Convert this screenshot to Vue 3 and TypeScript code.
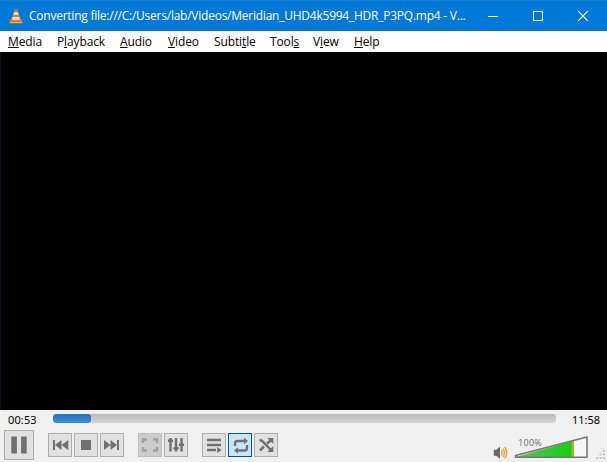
<script setup lang="ts">
interface MenuEntry { before: string; key: string; after: string; width: number }

const menus: MenuEntry[] = [
  { before: '', key: 'M', after: 'edia', width: 49 },
  { before: 'P', key: 'l', after: 'ayback', width: 63 },
  { before: '', key: 'A', after: 'udio', width: 48 },
  { before: '', key: 'V', after: 'ideo', width: 46 },
  { before: 'Subti', key: 't', after: 'le', width: 56 },
  { before: 'Tool', key: 's', after: '', width: 43 },
  { before: 'V', key: 'i', after: 'ew', width: 41 },
  { before: '', key: 'H', after: 'elp', width: 41 },
]
const progress = 7.5
</script>

<template>
  <div class="window">
    <header class="titlebar">
      <svg class="cone" width="14" height="16" viewBox="0 0 14 16">
        <path d="M2 11h10l2 3.2-.8 1.3H.8L0 14.2z" fill="#e57b13" />
        <path d="M6 1h2l3.6 11Q7 14.5 2.4 12z" fill="#e07a24" />
        <path d="M5.1 4h3.8l.9 2.6Q7 7.6 4.2 6.6zM3.4 9h7.2l.9 2.3Q7 13 2.5 11.3z" fill="#dcd6d0" />
        <path d="M1 14.4h12" stroke="#ffad4b" />
      </svg>
      <span class="title">Converting file:///C:/Users/lab/Videos/Meridian_UHD4k5994_HDR_P3PQ.mp4 - V...</span>
      <div class="caption">
        <svg viewBox="0 0 10 10"><path d="M0 5.5h10" /></svg>
        <svg viewBox="0 0 10 10"><path d="M.5.5h9v9h-9z" /></svg>
        <svg viewBox="0 0 10 10"><path class="smooth" d="M.3.3l9.4 9.4M9.7.3L.3 9.7" /></svg>
      </div>
    </header>

    <nav class="menubar">
      <span v-for="m in menus" :key="m.width + m.key" class="menu" :style="{ width: m.width + 'px' }">{{ m.before }}<u>{{ m.key }}</u>{{ m.after }}</span>
    </nav>

    <main class="video"></main>

    <footer class="controls">
      <div class="seek">
        <span class="time">00:53</span>
        <div class="track"><div class="fill" :style="{ width: progress + '%' }"></div></div>
        <span class="time end">11:58</span>
      </div>
      <div class="toolbar">
        <button class="btn play"><svg width="28" height="28" viewBox="0 0 28 28"><path d="M6.3 5.5h5.6v17H6.3zM16.1 5.5h5.6v17h-5.6z" /></svg></button>
        <div class="group">
          <button class="btn"><svg viewBox="0 0 22 22"><path d="M4 6h2v10H4zM12.5 6v10L6 11zM19.3 6v10L12.5 11z" /></svg></button>
          <button class="btn"><svg viewBox="0 0 22 22"><path d="M6 6h10v10H6z" /></svg></button>
          <button class="btn"><svg viewBox="0 0 22 22"><path d="M18 6h-2v10h2zM9.5 6v10l6.5-5zM3 6v10l6.5-5z" /></svg></button>
        </div>
        <div class="group">
          <button class="btn disabled"><svg viewBox="0 0 22 22"><path class="line" d="M8 5.5H4V9M14 5.5h4V9M8 16.5H4V13M14 16.5h4V13" /></svg></button>
          <button class="btn"><svg viewBox="0 0 22 22"><path class="line" d="M5.5 4v13.5M11 4v13.5M16.5 4v13.5" /><path d="M3 5.5h5v2.6H3zM8.5 13h5v2.6h-5zM14 9.5h5v2.6h-5z" /></svg></button>
        </div>
        <div class="group">
          <button class="btn"><svg viewBox="0 0 22 22"><path class="line" d="M4 6h14M4 11h14M4 16h9" /><path d="M14.2 13v6l4.5-3z" /></svg></button>
          <button class="btn active"><svg viewBox="0 0 22 22"><path class="line" d="M6 12V9.5Q6 7 8.5 7H16M18 11v3q0 2.5-2.5 2.5H8" /><path d="M15 3.8L19 7l-4 3.2zM9 13.3l-4 3.2 4 3.2z" /></svg></button>
          <button class="btn"><svg viewBox="0 0 22 22"><path class="thick" d="M4.5 6L7 6.8 16 16M5 16.5l4-4M12 9.5L16.5 6" /><path d="M18.3 4v6l-6-6zM18.3 18v-6l-6 6z" /></svg></button>
        </div>
        <div class="sound">
          <svg width="16" height="14" viewBox="0 0 16 14">
            <path d="M.8 3.8h2.4L7 .8v12L3.2 9.8H.8z" fill="#686868" />
            <path d="M8.2 4.3q2 2.5 0 5M9.8 2.6q3.4 4.2 0 8.4M11.6 1q4.2 5.8 0 11.6" fill="none" stroke="#f39a30" stroke-width="1.3" />
          </svg>
          <div class="volume">
            <span>100%</span>
            <svg width="75" height="25" viewBox="0 0 75 25">
              <defs>
                <linearGradient id="level" x2="1"><stop stop-color="#6fb474" /><stop offset=".55" stop-color="#35c934" /><stop offset=".91" stop-color="#19cf16" /><stop offset="1" stop-color="#1fc81b" /></linearGradient>
              </defs>
              <path d="M1.5 22L73 2v20z" fill="#f6f6f6" />
              <path d="M1.5 22L59 5.9V22z" fill="url(#level)" />
              <path d="M57.5 6.3L60 5.6V22h-2.5z" fill="#a5b71d" />
              <path d="M1.5 20.5L73 2v20.2H1.5z" fill="none" stroke="#767676" stroke-width="1.6" stroke-linejoin="round" />
            </svg>
          </div>
          <svg class="grip" width="10" height="10" viewBox="0 0 10 10"><path d="M7 0h2v2H7zM3.5 3.5h2v2h-2zM7 3.5h2v2H7zM0 7h2v2H0zM3.5 7h2v2h-2zM7 7h2v2H7z" /></svg>
        </div>
      </div>
    </footer>
  </div>
</template>

<style>
body { margin: 0; overflow: hidden; }
</style>

<style scoped>
.window { width: 607px; height: 462px; display: flex; flex-direction: column; font: 12px "Open Sans", "Noto Sans", sans-serif; background: #f0f0f0; box-sizing: border-box; }
.titlebar { height: 31px; box-sizing: border-box; display: flex; align-items: center; background: #0078d7; color: #fff; border-top: 1px solid #1683d9; padding-left: 9px; }
.cone { flex: none; }
.title { margin-left: 6px; width: 441px; flex: none; white-space: nowrap; line-height: 18px; letter-spacing: -.24px; }
.caption { display: flex; gap: 35px; margin-left: 18px; }
.caption svg { width: 10px; height: 10px; fill: none; stroke: #fff; stroke-width: 1; shape-rendering: crispEdges; }
.caption .smooth { shape-rendering: auto; stroke-width: 1.2; }
.menubar { height: 21px; display: flex; padding-left: 8px; background: #fff; color: #000; line-height: 22px; letter-spacing: -.12px; }
.menu { white-space: nowrap; flex: none; }
u { text-decoration-thickness: 1px; text-underline-offset: 1px; text-decoration-skip-ink: none; }
.video { height: 358px; background: #000; border-left: 1px solid #001026; box-sizing: border-box; }
.controls { height: 52px; background: #f0f0f0; }
.seek { height: 20px; display: flex; padding-left: 8px; color: #000; }
.time { width: 45px; font: 11px/20px "Noto Sans", sans-serif; letter-spacing: .12px; }
.end { margin-left: 16px; width: 34px; letter-spacing: 0; }
.track { width: 503px; height: 9px; margin-top: 4px; border-radius: 3px; background: linear-gradient(#b9b9b9, #d7d7d7); overflow: hidden; }
.fill { height: 100%; border-radius: 3px; background: linear-gradient(#2b70b8, #338bdc); }
.toolbar { display: flex; align-items: center; padding-left: 4px; height: 30px; }
.group { display: flex; gap: 2px; margin-left: 14px; }
.btn { width: 24px; height: 24px; padding: 0; box-sizing: border-box; border: 1px solid #adadad; background: #e1e1e1; flex: none; display: flex; }
.btn svg { width: 22px; height: 22px; fill: #707070; }
.btn.play { width: 30px; height: 30px; }
.btn.play svg { width: 28px; height: 28px; }
.btn .line { fill: none; stroke: #707070; stroke-width: 2.4; }
.btn .thick { fill: none; stroke: #707070; stroke-width: 2.5; }
.btn.disabled { background: #ccc; border-color: #bfbfbf; }
.btn.disabled .line { stroke: #a0a0a0; }
.btn.active { background: #cce4f7; border-color: #005499; }
.sound { display: flex; align-items: flex-end; height: 30px; margin-left: 215px; }
.volume { width: 75px; height: 25px; margin-left: 5px; position: relative; }
.volume svg { display: block; }
.volume span { position: absolute; left: 4px; top: 2px; font-size: 9px; line-height: 12px; letter-spacing: .3px; color: #6b6b6b; }
.grip { margin-left: 7px; fill: #c2c2c2; }
</style>
